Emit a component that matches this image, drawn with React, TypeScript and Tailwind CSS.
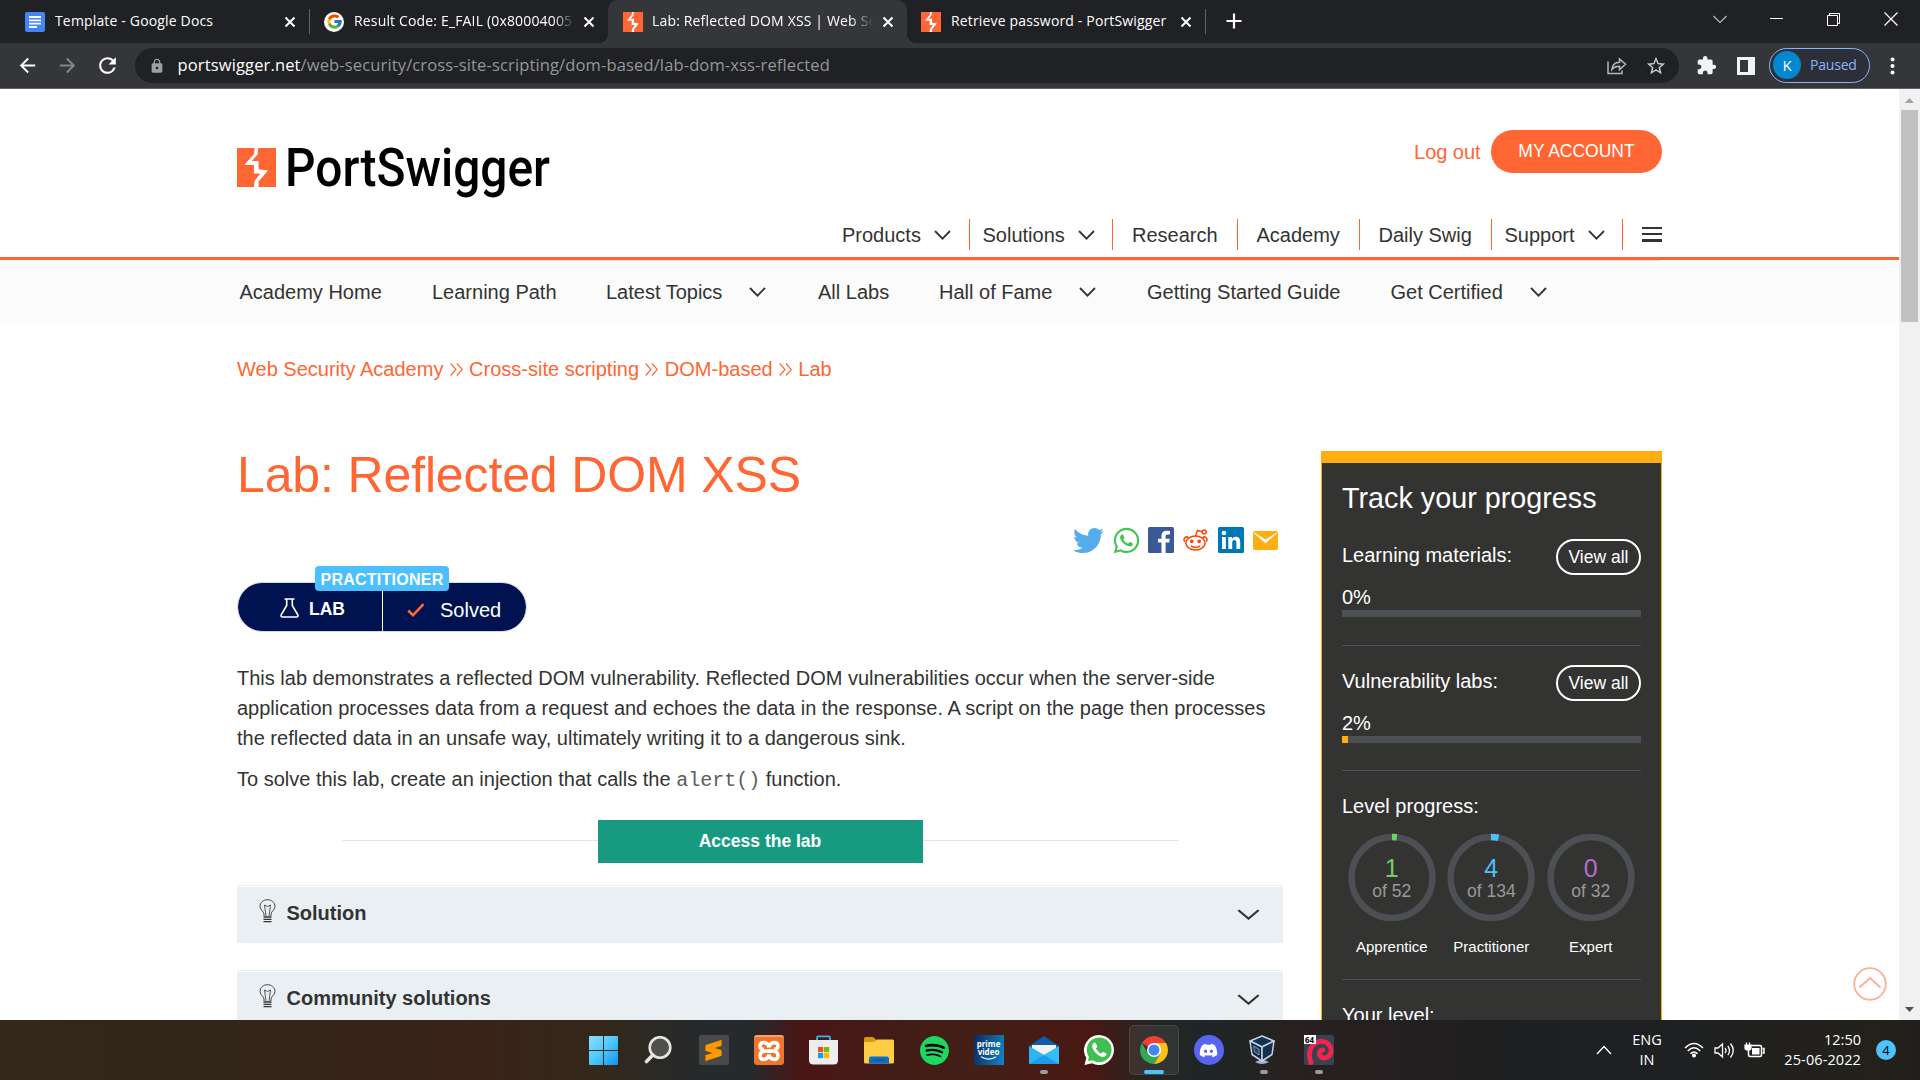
import React from "react";
import { FaTwitter, FaWhatsapp, FaDiscord } from "react-icons/fa";
import { FcGoogle } from "react-icons/fc";
import { MdArrowBack, MdArrowForward, MdExtension, MdLock, MdRefresh, MdStarBorder } from "react-icons/md";
import { SiSpotify, SiSublimetext } from "react-icons/si";

const BOLT =
  "M17.5 0H21.2L20.6 6.5L14.7 13H21.6V21.2L31 22.5L21.6 33.5V39H16.9L17.5 33L23.3 25.5H16.9V17H7.3L17.1 6Z";

function BoltMark({ size }: { size: number }) {
  return (
    <svg width={size} height={size} viewBox="0 0 39 39" className="shrink-0">
      <rect width="39" height="39" fill="#ff6633" />
      <path d={BOLT} fill="#fff" />
    </svg>
  );
}

function Close() {
  return (
    <svg width="12" height="12" viewBox="0 0 12 12" className="shrink-0">
      <path d="M1.5 1.5L10.5 10.5M10.5 1.5L1.5 10.5" stroke="#fff" strokeWidth="2" />
    </svg>
  );
}

function TabTitle({ children, className = "" }: { children: React.ReactNode; className?: string }) {
  return (
    <span
      className={
        "mb-[2px] overflow-hidden whitespace-nowrap text-[14px] leading-[20px] tracking-[0.16px] text-white " + className
      }
    >
      {children}
    </span>
  );
}

function TabStrip() {
  return (
    <div className="flex h-[43px] w-full bg-[#202124]">
      <div className="flex h-full w-[309px] items-center pl-[25px]">
        <svg width="20" height="20" viewBox="0 0 20 20">
          <rect width="20" height="20" rx="2" fill="#4285f4" />
          <path d="M4 5H16M4 8.3H16M4 11.7H16M4 15H12" stroke="#fff" strokeWidth="1.8" />
        </svg>
        <TabTitle className="ml-[10px] w-[229px]">Template - Google Docs</TabTitle>
        <Close />
      </div>
      <div className="mt-[9px] h-[25px] w-px bg-[#5f6368]" />
      <div className="flex h-full w-[298px] items-center rounded-br-[10px] pl-[14px]">
        <div className="flex size-5 items-center justify-center rounded-full bg-white">
          <FcGoogle size={17} />
        </div>
        <TabTitle className="ml-[10px] w-[221px] tracking-[-0.02px] [mask-image:linear-gradient(to_right,black_90%,transparent)]">
          Result Code: E_FAIL (0x80004005)
        </TabTitle>
        <div className="ml-[8px] flex">
          <Close />
        </div>
      </div>
      <div className="h-full bg-[#35363a]">
        <div className="flex h-full">
          <div className="-ml-[10px] flex w-[10px] items-end bg-[#202124]">
            <div className="size-[10px] bg-[radial-gradient(circle_at_0_0,#202124_10px,#35363a_10.5px)]" />
          </div>
          <div className="h-full bg-[#202124]">
            <div className="flex h-full w-[299px] items-center rounded-t-[10px] bg-[#35363a] pl-[15px]">
              <BoltMark size={20} />
              <TabTitle className="ml-[9px] w-[221px] [mask-image:linear-gradient(to_right,black_90%,transparent)]">
                Lab: Reflected DOM XSS | Web Security
              </TabTitle>
              <div className="ml-[9px] flex">
                <Close />
              </div>
            </div>
          </div>
        </div>
      </div>
      <div className="flex items-end bg-[#202124]">
        <div className="size-[10px] bg-[radial-gradient(circle_at_100%_0,#202124_10px,#35363a_10.5px)]" />
      </div>
      <div className="flex h-full w-[288px] items-center pl-[4px]">
        <BoltMark size={20} />
        <TabTitle className="ml-[10px] w-[229px]">Retrieve password - PortSwigger</TabTitle>
        <Close />
      </div>
      <div className="mt-[9px] h-[25px] w-px bg-[#5f6368]" />
      <svg width="16" height="16" viewBox="0 0 16 16" className="mt-[13px] ml-[19.5px]">
        <path d="M8 0.5V15.5M0.5 8H15.5" stroke="#fff" strokeWidth="2.2" />
      </svg>
      <div className="mt-[12px] ml-auto flex h-[14px] items-center pr-[22px]">
        <svg width="14" height="9" viewBox="0 0 14 9" className="mr-[43px]">
          <path d="M0.5 1L7 7.5L13.5 1" stroke="#bbb" strokeWidth="1.2" fill="none" />
        </svg>
        <div className="mr-[44px] mb-px h-px w-[13px] bg-white" />
        <svg width="13" height="13" viewBox="0 0 13 13" className="mr-[44px]">
          <path d="M0.5 2.5H10.5V12.5H0.5ZM2.5 2.5V0.5H12.5V10.5H10.5" stroke="#fff" fill="none" />
        </svg>
        <svg width="14" height="14" viewBox="0 0 14 14">
          <path d="M0.5 0.5L13.5 13.5M13.5 0.5L0.5 13.5" stroke="#fff" strokeWidth="1.2" />
        </svg>
      </div>
    </div>
  );
}

function Toolbar() {
  return (
    <div className="flex h-[46px] items-center border-b border-[#5f6368] bg-[#35363a]">
      <div className="flex w-[135px] items-center gap-[16.5px] pl-[16px]">
        <MdArrowBack size={23} color="#fff" />
        <MdArrowForward size={23} color="#85868a" />
        <MdRefresh size={25} color="#fff" />
      </div>
      <div className="flex h-[35px] w-[1544px] items-center rounded-full bg-[#202124] pl-[14px]">
        <MdLock size={16} color="#9aa0a6" />
        <span className="mb-px ml-[12.5px] text-[16.5px] leading-[22px] tracking-[0.14px] whitespace-nowrap text-[#94979b]">
          <span className="text-white">portswigger.net</span>
          /web-security/cross-site-scripting/dom-based/lab-dom-xss-reflected
        </span>
        <svg width="20" height="18" viewBox="0 0 20 18" className="ml-auto">
          <path
            d="M1 4.5V16.5H15V13.5M5 12.5C5.3 8 8 5.5 12.5 5.3V2L18.5 7.3L12.5 12.5V9.3C9 9.3 6.8 10.2 5 12.5Z"
            stroke="#b5b7ba"
            strokeWidth="1.5"
            fill="none"
          />
        </svg>
        <MdStarBorder size={22} color="#c8cacd" className="mr-[12px] ml-[18px]" />
      </div>
      <MdExtension size={21} color="#f1f3f4" className="ml-[17px]" />
      <svg width="18" height="18" viewBox="0 0 18 18" className="ml-[20px]">
        <path d="M0 0H18V18H0ZM3 3V15H11V3Z" fill="#f1f3f4" fillRule="evenodd" />
      </svg>
      <div className="ml-[14px] flex h-[35px] w-[101px] items-center rounded-full border-[1.5px] border-[#8ab4f8] bg-[#2c2f37] pl-[3px]">
        <div className="mb-px flex size-[28px] items-center justify-center rounded-full bg-[#0288d1] text-[15px] text-white">K</div>
        <span className="mb-[2px] ml-[9px] text-[14px] tracking-[-0.2px] text-[#8ab4f8]">Paused</span>
      </div>
      <svg width="5" height="18" viewBox="0 0 5 18" className="ml-[20px]">
        <circle cx="2.5" cy="2.5" r="2" fill="#fff" />
        <circle cx="2.5" cy="9" r="2" fill="#fff" />
        <circle cx="2.5" cy="15.5" r="2" fill="#fff" />
      </svg>
    </div>
  );
}

function Chevron({ className = "", w = 17, h = 10 }: { className?: string; w?: number; h?: number }) {
  return (
    <svg width={w} height={h} viewBox="0 0 17 10" preserveAspectRatio="none" className={"shrink-0 " + className}>
      <path d="M1 1L8.5 8.7L16 1" stroke="#333332" strokeWidth="1.8" fill="none" />
    </svg>
  );
}

function SiteHeader() {
  const cell = "flex h-[31px] items-center border-r border-[#ff6633] pt-px ";
  return (
    <header className="flex h-[171px] justify-between border-b-3 border-[#ff6633] px-[237px]">
      <div className="mt-[58px] flex">
        <div className="mt-px flex">
          <BoltMark size={39} />
        </div>
        <svg width="270" height="60" viewBox="0 0 270 60" className="ml-[9px]">
          <text
            x="0"
            y="39"
            fontFamily="Roboto, sans-serif"
            fontWeight="500"
            fontSize="53"
            textLength="265"
            lengthAdjust="spacingAndGlyphs"
            fill="#000"
          >
            PortSwigger
          </text>
        </svg>
      </div>
      <div className="flex flex-col items-end">
        <div className="mt-[41px] flex h-[43px] items-center">
          <span className="mr-[10.5px] text-[20px] leading-[30px] tracking-[-0.05px] text-[#ff6633]">Log out</span>
          <button className="flex h-[43px] w-[171px] justify-center rounded-full bg-[#ff6633] text-[17.5px] leading-[42px] text-white">
            MY ACCOUNT
          </button>
        </div>
        <nav className="mt-[46px] flex text-[20px] leading-[30px]">
          <div className={cell + "w-[128px]"}>
            Products
            <Chevron className="ml-[13.5px]" />
          </div>
          <div className={cell + "w-[143px] pl-[12.5px]"}>
            Solutions
            <Chevron className="ml-[13px]" />
          </div>
          <div className={cell + "w-[125px] pl-[19px]"}>Research</div>
          <div className={cell + "w-[122px] pl-[18.5px]"}>Academy</div>
          <div className={cell + "w-[132px] pl-[18.5px]"}>Daily Swig</div>
          <div className={cell + "w-[131px] pl-[12.5px]"}>
            Support
            <Chevron className="ml-[13px]" />
          </div>
          <div className="mt-[8px] ml-[19px] flex w-[20px] flex-col gap-[4px]">
            <div className="h-[2px] bg-[#333332]" />
            <div className="h-[2px] bg-[#333332]" />
            <div className="h-[3px] bg-[#333332]" />
          </div>
        </nav>
      </div>
    </header>
  );
}

function SubNav() {
  return (
    <div className="h-[64px] bg-[#fbfbfb] pr-[239px] pl-[239.5px]">
      <nav className="flex h-[64px] items-center border-t border-[#e6e6ea] pb-[2px] text-[20px] leading-[30px] whitespace-nowrap">
        <span className="w-[192.5px]">Academy Home</span>
        <span className="w-[174px]">Learning Path</span>
        <span className="w-[143px]">Latest Topics</span>
        <Chevron />
        <span className="ml-[52px] w-[121px]">All Labs</span>
        <span className="w-[139.5px]">Hall of Fame</span>
        <Chevron />
        <span className="ml-[51.5px] w-[243.5px]">Getting Started Guide</span>
        <span className="w-[139px]">Get Certified</span>
        <Chevron />
      </nav>
    </div>
  );
}

function DoubleArrow() {
  return (
    <svg width="13" height="13" viewBox="0 0 13 13" className="mr-[6.5px] ml-[6.2px]">
      <path d="M0.7 0.5L6 6.5L0.7 12.5M7 0.5L12.3 6.5L7 12.5" stroke="#ff6633" fill="none" strokeWidth="1.2" />
    </svg>
  );
}

function Social() {
  return (
    <div className="mt-[22px] flex h-[26px] items-center justify-end pr-[5px]">
      <FaTwitter size={31} color="#55acee" />
      <FaWhatsapp size={29} color="#43c353" className="ml-[7.5px]" />
      <svg width="26" height="26" viewBox="0 0 26 26" className="ml-[7.5px]">
        <rect width="26" height="26" rx="1.5" fill="#3b5998" />
        <path
          d="M13.5 26V15.5H10V11.7H13.5V9C13.5 5.4 15.6 3.8 18.7 3.8L22 4V7.5H19.8C18 7.5 17.6 8.3 17.6 9.6V11.7H21.8L21.2 15.5H17.6V26Z"
          fill="#fff"
        />
      </svg>
      <svg width="26" height="22" viewBox="0 0 26 22" className="ml-[9px]" fill="none" stroke="#ff4500" strokeWidth="1.5">
        <ellipse cx="12.5" cy="14" rx="9.6" ry="7" />
        <path d="M12.5 7L14.5 1.5L19 2.7M5.5 8.8C3 6.5 -0.5 9.5 1.8 12.7M19.5 8.8C22 6.5 25.5 9.5 23.2 12.7M8 16.8C10.5 18.8 14.5 18.8 17 16.8" />
        <circle cx="21.2" cy="2.9" r="2" />
        <circle cx="8.8" cy="12.3" r="1.1" fill="#ff4500" />
        <circle cx="16.2" cy="12.3" r="1.1" fill="#ff4500" />
      </svg>
      <svg width="26" height="26" viewBox="0 0 26 26" className="ml-[9px]" fill="#fff">
        <rect width="26" height="26" rx="1.5" fill="#0077b5" />
        <rect x="4" y="10" width="3.9" height="12" />
        <circle cx="5.9" cy="6" r="2.3" />
        <path d="M10.3 10H14V11.7C14.8 10.4 16 9.7 17.7 9.7C21.2 9.7 22.2 11.9 22.2 15.3V22H18.4V16C18.4 14.4 18.1 13 16.4 13C14.7 13 14.2 14.3 14.2 15.9V22H10.3Z" />
      </svg>
      <svg width="25" height="19" viewBox="0 0 25 19" className="mt-[1px] ml-[9px]">
        <rect width="25" height="19" rx="2" fill="#ffae11" />
        <path d="M1.5 2.2L12.5 11.8L23.5 2.2L12.5 9Z" fill="#fff" stroke="#fff" />
      </svg>
    </div>
  );
}

function LabBadge() {
  return (
    <div className="relative mt-[30px] ml-px flex h-[48px] w-[288px] rounded-full bg-[#001350] text-white outline outline-[#b9bfd0]/60">
      <div className="flex h-full w-[144.5px] items-center border-r border-white pl-[42px]">
        <svg width="19" height="20" viewBox="0 0 19 20" className="mt-px" fill="none" stroke="#fff" strokeWidth="1.6">
          <path d="M4.5 1H14.5M6.7 1V7.5L1.3 16.5C0.7 18 1.2 19 2.5 19H16.5C17.8 19 18.3 18 17.7 16.5L12.3 7.5V1" />
        </svg>
        <span className="mt-[4px] ml-[10px] text-[17.5px] leading-[24px] font-bold">LAB</span>
      </div>
      <svg width="18" height="14" viewBox="0 0 18 14" className="mt-[20px] ml-[24.5px]">
        <path d="M1.2 7.5L6 12.2L16.5 1.2" stroke="#ff6633" strokeWidth="2.6" fill="none" />
      </svg>
      <span className="mt-[12px] ml-[15px] text-[20px] leading-[30px]">Solved</span>
      <span className="absolute -top-[17px] left-[77px] flex h-[25px] w-[134px] items-center justify-center rounded-[4px] bg-[#4bc0ff] pt-[2px] text-[16px] leading-[25px] font-bold tracking-[0.25px]">
        PRACTITIONER
      </span>
    </div>
  );
}

function Accordion({ title, className }: { title: string; className: string }) {
  return (
    <div className={"h-[58px] border-t border-[#e9eff2] pt-px " + className}>
      <div className="flex h-[56px] bg-[#e9eff2] pr-[23px] pl-[22px]">
        <svg width="17" height="24" viewBox="0 0 17 24" className="mt-[12px]" fill="none" stroke="#333332" strokeWidth="0.9">
          <path d="M5 17V15C5 12.5 1 11 1 7.5C1 3.5 4.5 0.7 8.5 0.7C12.5 0.7 16 3.5 16 7.5C16 11 12 12.5 12 15V17" />
          <path d="M7 17L5.5 6L8.5 7.5L11.5 6L10 17" strokeWidth="0.8" />
          <path d="M4.5 18H12.5M4.5 20.3H12.5M4.5 22.6H12.5" strokeWidth="1.3" />
        </svg>
        <span className="mt-[11px] ml-[10.5px] text-[20px] leading-[30px] font-bold">{title}</span>
        <Chevron w={23} h={11} className="mt-[22px] ml-auto" />
      </div>
    </div>
  );
}

function ProgressBlock({ label, value, width, className }: { label: string; value: string; width: number; className: string }) {
  return (
    <div className={className}>
      <div className="flex justify-between">
        <span className="mt-px leading-[30px]">{label}</span>
        <span className="flex h-[36px] w-[85px] items-center justify-center rounded-full border-2 border-white text-[17.5px]">
          View all
        </span>
      </div>
      <div className="mt-[9px] leading-[26px]">{value}</div>
      <div className="h-[7px] bg-[#4c4f54]">
        <div className="h-full bg-[#ffae11]" style={{ width }} />
      </div>
    </div>
  );
}

function Ring({ n, total, color, label }: { n: number; total: number; color: string; label: string }) {
  const c = 2 * Math.PI * 40.5;
  return (
    <div className="flex w-[88px] flex-col items-center">
      <div className="grid size-[88px] *:col-start-1 *:row-start-1">
        <svg width="88" height="88" viewBox="0 0 88 88" className="-rotate-90" fill="none" strokeWidth="6.5">
          <circle cx="43.5" cy="44" r="40.5" stroke="#4c4f54" />
          <circle cx="43.5" cy="44" r="40.5" stroke={color} strokeDasharray={`${(c * n) / total} ${c}`} />
        </svg>
        <div className="flex flex-col items-center pt-[19.5px]">
          <span className="text-[25px] leading-[30px]" style={{ color }}>
            {n}
          </span>
          <span className="text-[17.5px] leading-[17px] text-[#999]">of {total}</span>
        </div>
      </div>
      <span className="mt-[16px] text-[15px] leading-[20px]">{label}</span>
    </div>
  );
}

function Sidebar() {
  return (
    <aside className="mt-[127px] ml-[38px] h-[600px] w-[341px] shrink-0 border-x border-t-12 border-[#ffae11] bg-[#333332] px-[20px] pt-[17px] text-[20px] text-white">
      <div className="text-[28.75px] leading-[36px]">Track your progress</div>
      <ProgressBlock label="Learning materials:" value="0%" width={0} className="mt-[23px]" />
      <div className="mt-[28px] h-px bg-[#4c4f54]" />
      <ProgressBlock label="Vulnerability labs:" value="2%" width={6} className="mt-[19px]" />
      <div className="mt-[27px] h-px bg-[#4c4f54]" />
      <div className="mt-[20px] leading-[30px]">Level progress:</div>
      <div className="mt-[12px] flex gap-[11.5px] pl-[5.8px]">
        <Ring n={1} total={52} color="#6fcf6a" label="Apprentice" />
        <Ring n={4} total={134} color="#4bc0ff" label="Practitioner" />
        <Ring n={0} total={32} color="#b06fc9" label="Expert" />
      </div>
      <div className="mt-[22px] h-px bg-[#4c4f54]" />
      <div className="mt-[20px] leading-[30px]">Your level:</div>
    </aside>
  );
}

function Page() {
  return (
    <div className="flex h-[931px] overflow-hidden bg-white [font-family:'Liberation_Sans',Arial,sans-serif]">
      <div className="relative h-full w-[1899px] overflow-hidden text-[#333332]">
        <SiteHeader />
        <SubNav />
        <div className="flex pl-[237px]">
          <main className="w-[1046px] shrink-0 text-[20px] leading-[30px] whitespace-nowrap">
            <div className="mt-[30px] flex items-center text-[#ff6633]">
              Web Security Academy
              <DoubleArrow />
              Cross-site scripting
              <DoubleArrow />
              DOM-based
              <DoubleArrow />
              Lab
            </div>
            <h1 className="mt-[61px] text-[50px] leading-[60px] tracking-[-0.14px] text-[#ff6633]">Lab: Reflected DOM XSS</h1>
            <Social />
            <LabBadge />
            <p className="mt-[32px]">
              This lab demonstrates a reflected DOM vulnerability. Reflected DOM vulnerabilities occur when the server-side
              <br />
              application processes data from a request and echoes the data in the response. A script on the page then processes
              <br />
              the reflected data in an unsafe way, ultimately writing it to a dangerous sink.
            </p>
            <p className="mt-[11px]">
              To solve this lab, create an injection that calls the{" "}
              <code className="text-[20px] leading-[20px] text-[#5c5c5b] [font-family:'Liberation_Mono',monospace]">alert()</code>{" "}
              function.
            </p>
            <div className="mt-[26px] ml-[105px] flex w-[837px] items-center">
              <div className="mb-[2px] h-px flex-1 bg-[#e4e4e4]" />
              <button className="-ml-px h-[43px] w-[325px] bg-[#179b80] pb-px text-[17.5px] leading-[41px] font-bold text-white">
                Access the lab
              </button>
              <div className="mb-[2px] h-px flex-1 bg-[#e4e4e4]" />
            </div>
            <Accordion title="Solution" className="mt-[22px]" />
            <Accordion title="Community solutions" className="mt-[27px]" />
          </main>
          <Sidebar />
        </div>
        <svg
          width="34"
          height="34"
          viewBox="0 0 34 34"
          className="absolute top-[878px] left-[1853px]"
          fill="none"
          stroke="#ffae95"
          strokeWidth="1.8"
        >
          <circle cx="17" cy="17" r="15.8" />
          <path d="M6.5 20.5L17 11L27.5 20.5" strokeWidth="2" />
        </svg>
      </div>
      <div className="flex h-full w-[21px] flex-col items-center bg-[#f1f1f1]">
        <svg width="9" height="5" viewBox="0 0 9 5" className="mt-[9px] mb-[7px]">
          <path d="M4.5 0L9 5H0Z" fill="#a3a3a3" />
        </svg>
        <div className="h-[212px] w-[17px] bg-[#c1c1c1]" />
        <svg width="9" height="5" viewBox="0 0 9 5" className="mt-auto mb-[8px]">
          <path d="M4.5 5L9 0H0Z" fill="#505050" />
        </svg>
      </div>
    </div>
  );
}

function AppCell({ children, mark = "none" }: { children: React.ReactNode; mark?: "none" | "open" | "active" }) {
  return (
    <div className="relative flex h-[60px] w-[55px] items-center justify-center">
      {mark === "active" && (
        <div className="absolute top-[5px] left-[2.5px] size-[50px] rounded-[5px] border border-white/10 bg-white/7" />
      )}
      <div className="relative flex">{children}</div>
      {mark === "open" && <div className="absolute top-[50px] h-[4px] w-[8px] rounded-full bg-[#9a9a9a]" />}
      {mark === "active" && <div className="absolute top-[50px] h-[4px] w-[20px] rounded-full bg-[#4cc2ff]" />}
    </div>
  );
}

function Taskbar() {
  return (
    <div className="flex h-[60px] items-center bg-[linear-gradient(to_right,#33281a_0,#33261a_220px,#3a2318_470px,#33281a_600px,#252a2c_705px,#252a2c_750px,#4a1517_800px,#421d17_900px,#431f16_980px,#491813_1090px,#252523_1150px,#1f2627_1200px,#272121_1290px,#261f20_1360px,#1e1f20_1500px,#1f2021_1700px,#24211a_1880px,#201f1c_1920px)] text-white">
      <div className="ml-[576px] flex">
        <AppCell>
          <svg width="29" height="29" viewBox="0 0 29 29">
            <defs>
              <linearGradient id="win" x1="0" y1="0" x2="1" y2="1">
                <stop offset="0" stopColor="#8ae0ff" />
                <stop offset="0.5" stopColor="#4cc8fb" />
                <stop offset="1" stopColor="#0f93f5" />
              </linearGradient>
            </defs>
            <path
              d="M0 1Q0 0 1 0H14V14H0ZM15 0H28Q29 0 29 1V14H15ZM0 15H14V29H1Q0 29 0 28ZM15 15H29V28Q29 29 28 29H15Z"
              fill="url(#win)"
            />
          </svg>
        </AppCell>
        <AppCell>
          <svg width="28" height="28" viewBox="0 0 28 28" className="mr-[2px]" fill="none" stroke="#e4e4e6">
            <circle cx="16" cy="11.5" r="10.3" strokeWidth="2.6" fill="#ffffff" fillOpacity="0.18" />
            <path d="M8.8 19L2.5 25.5" strokeWidth="3.6" strokeLinecap="round" />
          </svg>
        </AppCell>
        <AppCell>
          <div className="flex size-[30px] items-center justify-center rounded-[2px] bg-[#494949]">
            <SiSublimetext size={21} color="#ff9800" />
          </div>
        </AppCell>
        <AppCell>
          <div className="flex size-[30px] items-center justify-center rounded-[3px] border-t-2 border-[#f9a26c] bg-[#f0742a]">
            <svg width="24" height="22" viewBox="0 0 24 22" fill="none" stroke="#fff" strokeWidth="3.6" strokeLinejoin="round">
              <path d="M12 7.5C11 1.5 3 1 3 6C3 8.5 5 9.5 7 9.5M12 7.5C13 1.5 21 1 21 6C21 8.5 19 9.5 17 9.5M12 14.5C11 20.5 3 21 3 16C3 12.5 5 11 8.5 11M12 14.5C13 20.5 21 21 21 16C21 12.5 19 11 15.5 11M8.5 11H15.5M12 9V13" />
            </svg>
          </div>
        </AppCell>
        <AppCell>
          <svg width="29" height="30" viewBox="0 0 29 30">
            <path d="M8 6V2.5Q8 1.3 9.2 1.3H19.8Q21 1.3 21 2.5V6" fill="none" stroke="#35b6ea" strokeWidth="1.8" />
            <path d="M0 5H29V25Q29 29.5 24.5 29.5H4.5Q0 29.5 0 25Z" fill="#ededed" />
            <rect x="9" y="12" width="5.2" height="5.2" fill="#f25022" />
            <rect x="15" y="12" width="5.2" height="5.2" fill="#7fba00" />
            <rect x="9" y="18" width="5.2" height="5.2" fill="#00a4ef" />
            <rect x="15" y="18" width="5.2" height="5.2" fill="#ffb900" />
          </svg>
        </AppCell>
        <AppCell>
          <svg width="30" height="27" viewBox="0 0 30 27">
            <path d="M0 1.5Q0 0 1.5 0H9L12.5 3V9H0Z" fill="#d9980c" />
            <path d="M0 5H10L13 2.5H28.5Q30 2.5 30 4V25Q30 26.5 28.5 26.5H1.5Q0 26.5 0 25Z" fill="#ffcc45" />
            <path d="M5 26.5V21.5Q5 19.5 7 19.5H23Q25 19.5 25 21.5V26.5Z" fill="#0c70c8" />
            <path d="M9 23H21" stroke="#064a8c" />
          </svg>
        </AppCell>
        <AppCell>
          <div className="ml-px flex size-[29px] rounded-full bg-black">
            <SiSpotify size={29} color="#1ed760" />
          </div>
        </AppCell>
        <AppCell>
          <div className="flex size-[30px] flex-col items-center bg-[linear-gradient(100deg,#0a2a5e,#1186c8)] pt-[5px] font-bold [font-family:'Open_Sans',sans-serif]">
            <span className="text-[8px] leading-[7.5px]">prime</span>
            <span className="text-[8px] leading-[7.5px]">video</span>
            <svg width="18" height="5" viewBox="0 0 18 5" className="mt-px">
              <path d="M1 0.8Q9 5.5 16 0.8" stroke="#fff" fill="none" strokeWidth="1.2" />
            </svg>
          </div>
        </AppCell>
        <AppCell mark="open">
          <svg width="30" height="28" viewBox="0 0 30 28">
            <path d="M0 10L15 0L30 10V14H0Z" fill="#0f5cab" />
            <path d="M3 9H27V18L15 22L3 18Z" fill="#f2f2f2" />
            <path d="M0 10L15 19L0 28Z" fill="#2bb5f3" />
            <path d="M30 10V28H0V27.5Z" fill="#37bdf5" />
            <path d="M15 19L30 28H0Z" fill="#1c9be8" />
          </svg>
        </AppCell>
        <AppCell>
          <svg width="30" height="30" viewBox="0 0 30 30">
            <path d="M15 0A15 15 0 1 1 8 28.3L0.5 30L2.3 22.8A15 15 0 0 1 15 0Z" fill="#fff" />
            <circle cx="15.2" cy="14.8" r="12.4" fill="#3fbf50" />
            <path d="M4 26L5.5 19L11 25Z" fill="#3fbf50" />
            <path
              d="M10.5 7.5C8 8.5 7.5 11 9 14C11 18 14 20.8 18 22C20.5 22.5 22.5 21 22.7 18.8L19 16.8L17.2 18.5C15 17.7 12.9 15.7 11.9 13.5L13.2 11.8L11.8 8Z"
              fill="#fff"
            />
          </svg>
        </AppCell>
        <AppCell mark="active">
          <svg width="28" height="28" viewBox="0 0 28 28">
            <path d="M14 14L1.88 7A14 14 0 0 1 26.12 7L14 7Z" fill="#ea4335" />
            <path d="M14 7H26.12A14 14 0 0 1 14 28L20.06 17.5Z" fill="#fbc116" />
            <path d="M1.88 7A14 14 0 0 0 14 28L20.06 17.5L7.94 17.5Z" fill="#34a853" />
            <circle cx="14" cy="14" r="7" fill="#fff" />
            <circle cx="14" cy="14" r="5.5" fill="#4285f4" />
          </svg>
        </AppCell>
        <AppCell>
          <div className="flex size-[30px] items-center justify-center rounded-full bg-[#5865f2]">
            <FaDiscord size={19} color="#fff" />
          </div>
        </AppCell>
        <AppCell mark="open">
          <svg
            width="26"
            height="30"
            viewBox="0 0 26 30"
            className="mr-[4px]"
            stroke="#c3d3e4"
            strokeWidth="1.5"
            strokeLinejoin="round"
          >
            <path d="M6 27Q13 23 20 27Q13 31 6 27Z" fill="#9fb3ca" stroke="none" />
            <path d="M13 1L25 6L13 12L1 6Z" fill="#123152" />
            <path d="M1 6L13 12V26L3 19.5Z" fill="#12263f" />
            <path d="M25 6L13 12V26L23 19.5Z" fill="#15304f" />
            <path d="M4.5 11L10 14V20L5.5 17Z" fill="#1c4675" strokeWidth="0.6" />
          </svg>
        </AppCell>
        <AppCell mark="open">
          <div className="relative flex size-[30px] rounded-[2px] bg-[#3a4150]">
            <svg width="30" height="30" viewBox="0 0 30 30" fill="none" stroke="#f0264f" strokeLinecap="round">
              <path d="M7 27.500C3 18 7 7.500 16 6.500C24 6 28 11.500 27 17C26 22.500 19.500 24.500 16.500 21.500C14 18.500 16 14.500 19 15" strokeWidth="4.8" />
            </svg>
            <span className="absolute top-0 left-0 h-[9px] w-[12px] bg-white text-center text-[8px] leading-[9px] font-bold text-black">
              64
            </span>
          </div>
        </AppCell>
      </div>
      <div className="ml-auto flex h-full items-center pr-[24px] text-[14.5px] leading-[20px]">
        <svg width="16" height="10" viewBox="0 0 16 10" className="mr-[20px]">
          <path d="M1 9L8 1.5L15 9" stroke="#fff" strokeWidth="1.4" fill="none" />
        </svg>
        <div className="w-[30px] text-center">
          ENG
          <br />
          IN
        </div>
        <svg width="20" height="16" viewBox="0 0 20 16" className="ml-[22px]" fill="none" stroke="#fff" strokeWidth="1.5">
          <path d="M1 6Q10 -3 19 6M3.8 9Q10 2.5 16.2 9M6.5 11.8Q10 8 13.5 11.8" />
          <circle cx="10" cy="13.5" r="1.3" fill="#fff" />
        </svg>
        <svg width="21" height="17" viewBox="0 0 21 17" className="ml-[10px]" fill="none" stroke="#fff" strokeWidth="1.3">
          <path d="M1 6H4L8.5 2V15L4 11H1ZM11 6Q13 8.5 11 11M13.8 3.8Q17.2 8.5 13.8 13.2M16.5 1.5Q22 8.5 16.5 15.5" />
        </svg>
        <svg width="21" height="17" viewBox="0 0 21 17" className="ml-[9px]" fill="none" stroke="#fff" strokeWidth="1.5">
          <path d="M7 3.5H16Q17.5 3.5 17.5 5V13Q17.5 14.5 16 14.5H6Q4.5 14.5 4.5 13V8" />
          <path d="M18.5 6.5H20V11H18.5" />
          <path d="M1 3H7V6Q7 8 4 8Q1 8 1 6ZM2.5 0.5V3M5.5 0.5V3" fill="#fff" strokeWidth="1.2" />
          <rect x="8" y="6" width="7.5" height="6.5" fill="#fff" stroke="none" />
        </svg>
        <div className="ml-[16px] w-[80px] text-right whitespace-nowrap">
          12:50
          <br />
          <span className="tracking-[0.1px]">25-06-2022</span>
        </div>
        <div className="ml-[15px] flex size-[20px] items-center justify-center rounded-full bg-[#4cc2ff] text-[13px] text-black">
          4
        </div>
      </div>
    </div>
  );
}

export default function App() {
  return (
    <div className="h-[1080px] w-[1920px] overflow-hidden [font-family:'Open_Sans','Noto_Sans',sans-serif]">
      <TabStrip />
      <Toolbar />
      <Page />
      <Taskbar />
    </div>
  );
}
